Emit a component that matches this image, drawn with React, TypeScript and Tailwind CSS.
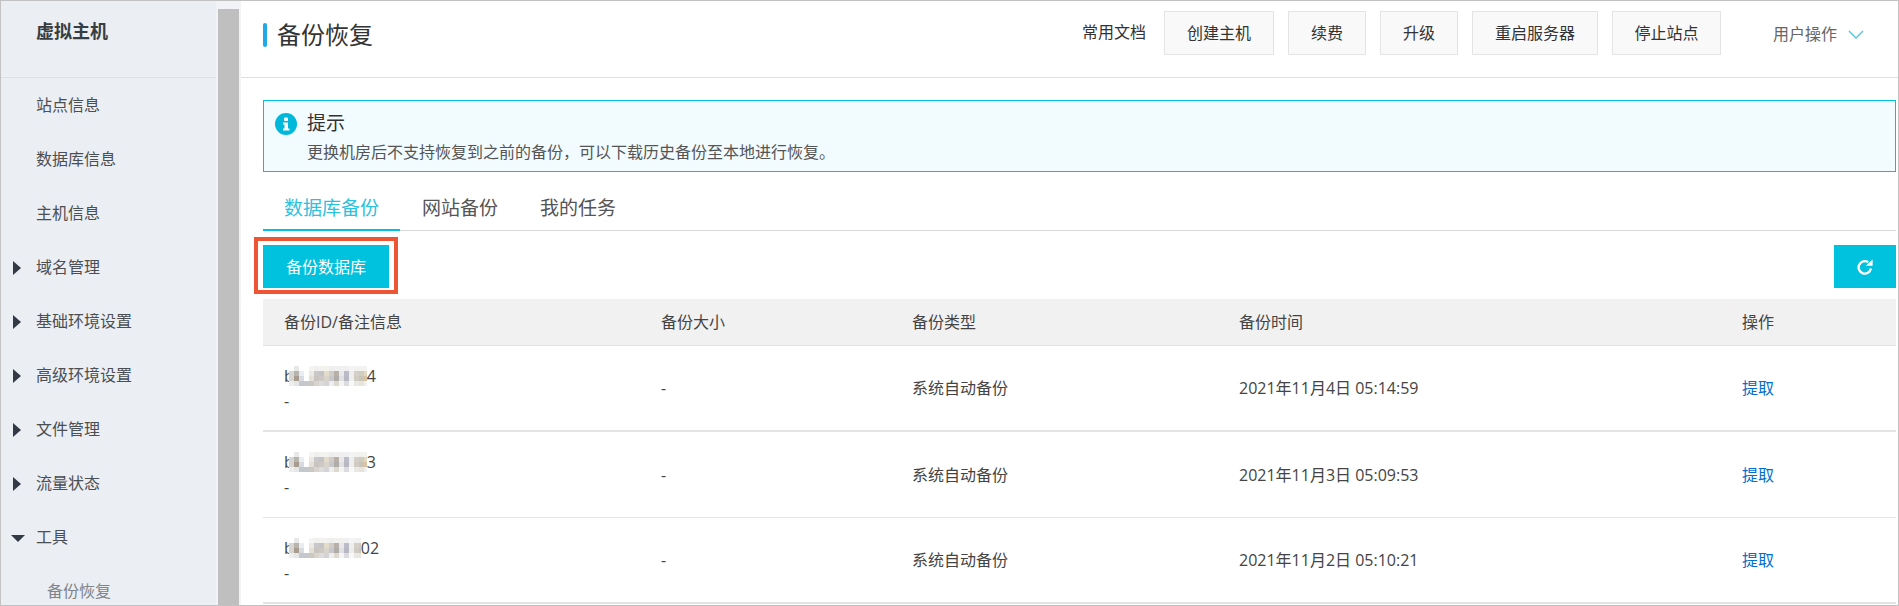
const font = { fontFamily: '"Open Sans", "Noto Sans CJK SC", sans-serif' }

const menu = [
  { label: '站点信息' },
  { label: '数据库信息' },
  { label: '主机信息' },
  { label: '域名管理', arrow: 'right' },
  { label: '基础环境设置', arrow: 'right' },
  { label: '高级环境设置', arrow: 'right' },
  { label: '文件管理', arrow: 'right' },
  { label: '流量状态', arrow: 'right' },
  { label: '工具', arrow: 'down' },
]

const actions = [
  { label: '创建主机', w: 'w-[110px]' },
  { label: '续费', w: 'w-[78px]' },
  { label: '升级', w: 'w-[78px]' },
  { label: '重启服务器', w: 'w-[126px]' },
  { label: '停止站点', w: 'w-[109px]' },
]

const rows = [
  { tail: '4', mosaicW: 78, time: '2021年11月4日 05:14:59', border: 'border-b-2' },
  { tail: '3', mosaicW: 78, time: '2021年11月3日 05:09:53', border: 'border-b' },
  { tail: '02', mosaicW: 72, time: '2021年11月2日 05:10:21', border: 'border-b-2' },
]

// colours read off the blurred id in the reference, 5px blocks
const mosaic = [
  ['#ffffff', '#e8e8e8', '#ffffff', '#ffffff', '#f4f4f2', '#f0f0ee', '#f2f2f0', '#f4f2ee', '#eeeeee', '#f2f0ee', '#f0f0f0', '#f0f0f2', '#f4f4f4', '#f2f2f0', '#f2f2ee', '#f4f2ee'],
  ['#d8d6d4', '#b8b4ae', '#eaeef2', '#ffffff', '#ece9e4', '#c8c8ca', '#c4c4c6', '#e4dcc8', '#d0ccc8', '#b8b0a8', '#e8e8ea', '#bcbcc8', '#eeeeee', '#d4d0c8', '#d0ccc0', '#e4d8c0'],
  ['#d8d4d0', '#a89c90', '#d8dce0', '#ffffff', '#e4e0d8', '#c8c4c0', '#ccc8c4', '#d8d4cc', '#c8c8cc', '#b0aca8', '#e0e0e2', '#b8b8c4', '#eeeeee', '#d0ccc4', '#c8c4b8', '#d8c4a0'],
  ['#eeeeee', '#e4e6e8', '#c4c8cc', '#c4c8cc', '#ccc8c0', '#d8d4cc', '#dcdcdc', '#d4d4d8', '#eeeeee', '#ddd8d0', '#f4f4f4', '#dcdce0', '#f8f8f8', '#e8e8e4', '#e8e4dc', '#f0f0f0'],
]

// pixelated privacy blur over the backup id
function Mosaic({ width }: { width: number }) {
  const cols = Math.ceil(width / 5)
  return (
    <svg width={width} height={20} shapeRendering="crispEdges" className="relative -ml-[5px] shrink-0">
      {mosaic.map((row, r) =>
        row.slice(0, cols).map((fill, c) => (
          <rect key={`${r}-${c}`} x={c * 5} y={r * 5} width={5} height={5} fill={fill} />
        )),
      )}
    </svg>
  )
}

function Arrow({ dir }: { dir?: string }) {
  if (dir === 'right') {
    return (
      <svg width="8" height="14" viewBox="0 0 8 14" className="absolute left-[12px] top-[21px]">
        <path d="M0 0 L8 7 L0 14 Z" fill="#333a45" />
      </svg>
    )
  }
  if (dir === 'down') {
    return (
      <svg width="14" height="7" viewBox="0 0 14 7" className="absolute left-[10px] top-[25px]">
        <path d="M0 0 L14 0 L7 7 Z" fill="#333a45" />
      </svg>
    )
  }
  return null
}

export default function App() {
  return (
    <div style={font} className="flex h-[606px] w-[1899px] overflow-hidden border border-[#c2c2c2] bg-white text-[#333]">
      {/* sidebar */}
      <aside className="w-[215px] shrink-0 overflow-hidden bg-[#ebeef3]">
        <div className="h-[77px] border-b border-[#dcdfe3] pl-[35px] pt-[16px] text-[18px] font-bold leading-[28px] text-[#373d41]">
          虚拟主机
        </div>
        <nav>
          {menu.map((item) => (
            <div key={item.label} className="relative h-[54px] pl-[35px] text-[16px] leading-[54px] text-[#4a4f54]">
              <Arrow dir={item.arrow} />
              {item.label}
            </div>
          ))}
          <div className="pl-[46px] text-[16px] leading-[54px] text-[#808488]">备份恢复</div>
        </nav>
      </aside>

      {/* scrollbar track */}
      <div className="w-[25px] shrink-0 bg-[#f1f3f6] pl-[2px] pr-[2px] pt-[8px]">
        <div className="h-full w-[21px] bg-[#bfbfbf]" />
      </div>

      <main className="min-w-0 flex-1">
        <header className="flex h-[77px] items-start border-b border-[#dcdfe3] pl-[22px] pr-[34px]">
          <div className="mt-[22px] h-[24px] w-[4px] rounded-[2px] bg-[#1fa9e8]" />
          <h1 className="ml-[10px] mt-[16px] text-[24px] font-normal leading-[36px] text-[#333]">备份恢复</h1>
          <div className="ml-auto flex items-start">
            <span className="mr-[18px] mt-[19px] text-[16px] leading-[24px] text-[#333]">常用文档</span>
            <div className="flex gap-[14px]">
              {actions.map((a) => (
                <button
                  key={a.label}
                  className={`mt-[10px] h-[44px] border border-[#e4e4e4] bg-[#f9f9f9] text-[16px] leading-[42px] text-[#333] ${a.w}`}
                >
                  {a.label}
                </button>
              ))}
            </div>
            <span className="ml-[52px] mt-[21px] text-[16px] leading-[24px] text-[#666]">用户操作</span>
            <svg width="16" height="9" viewBox="0 0 16 9" fill="none" className="ml-[11px] mt-[29px]">
              <path d="M1 1 L8 8 L15 1" stroke="#4cc4e2" strokeWidth="1.3" />
            </svg>
          </div>
        </header>

        <div className="pl-[22px] pr-[2px]">
          {/* notice */}
          <div className="mt-[22px] flex h-[72px] border border-[#00c1de] bg-[#f2fbfe] pl-[11px]">
            <svg width="22" height="22" viewBox="0 0 22 22" className="mt-[12px] shrink-0">
              <circle cx="11" cy="11" r="11" fill="#00b8d9" />
              <rect x="9" y="4.5" width="4" height="3.5" rx="1" fill="#fff" />
              <path d="M8 9.5 H13 V15.5 H14.5 V17.5 H8 V15.5 H9.5 V11.5 H8 Z" fill="#fff" />
            </svg>
            <div className="ml-[10px]">
              <div className="mt-[7px] text-[19px] leading-[30px] text-[#333]">提示</div>
              <div className="mt-[2px] text-[16px] leading-[24px] text-[#555]">
                {'更换机房后不支持恢复到之前的备份\uFF0C可以下载历史备份至本地进行恢复\u3002'}
              </div>
            </div>
          </div>

          {/* tabs */}
          <div className="mt-[14px] flex h-[45px] border-b border-[#d8d8d8] text-[19px] leading-[44px]">
            <div className="-mb-[1px] h-[45px] w-[137px] border-b-2 border-[#00c1de] pl-[21px] text-[#2cc1dd]">数据库备份</div>
            <div className="ml-[22px] text-[#555]">网站备份</div>
            <div className="ml-[42px] text-[#555]">我的任务</div>
          </div>

          {/* toolbar */}
          <div className="mt-[14px] flex items-start justify-between">
            <div className="relative">
              <button className="h-[43px] w-[126px] bg-[#00c1de] text-[16px] text-white">备份数据库</button>
              <div className="absolute -bottom-[6px] -left-[9px] -right-[9px] -top-[8px] border-4 border-[#ee5535]" />
            </div>
            <button className="flex h-[43px] w-[62px] items-center justify-center bg-[#00c1de]">
              <svg width="16" height="16" viewBox="0 0 16 16" fill="none">
                <path d="M13.9 9.5 A6.2 6.2 0 1 1 11.2 3.2" stroke="#fff" strokeWidth="2.4" />
                <path d="M8.8 6.8 L15.6 6.8 L15.6 0.4 Z" fill="#fff" />
              </svg>
            </button>
          </div>

          {/* table */}
          <div className="mt-[11px]">
            <div className="grid h-[47px] grid-cols-[378px_251px_327px_504px_1fr] items-center border-b border-[#e2e2e2] bg-[#f1f1f1] text-[16px] text-[#444]">
              <div className="pl-[21px]">备份ID/备注信息</div>
              <div className="pl-[20px]">备份大小</div>
              <div className="pl-[20px]">备份类型</div>
              <div className="pl-[20px]">备份时间</div>
              <div className="pl-[19px]">操作</div>
            </div>
            {rows.map((row) => (
              <div
                key={row.time}
                className={`grid h-[86px] grid-cols-[378px_251px_327px_504px_1fr] items-center border-[#e4e4e4] text-[16px] text-[#444] ${row.border}`}
              >
                <div className="pl-[21px]">
                  <div className="flex h-[24px] items-center leading-[24px]">
                    <span>b</span>
                    <Mosaic width={row.mosaicW} />
                    <span>{row.tail}</span>
                  </div>
                  <div className="mt-[1px] leading-[24px]">-</div>
                </div>
                <div className="pl-[20px]">-</div>
                <div className="pl-[20px]">系统自动备份</div>
                <div className="pl-[20px]">{row.time}</div>
                <div className="pl-[19px] text-[#0070cc]">提取</div>
              </div>
            ))}
          </div>
        </div>
      </main>
    </div>
  )
}
